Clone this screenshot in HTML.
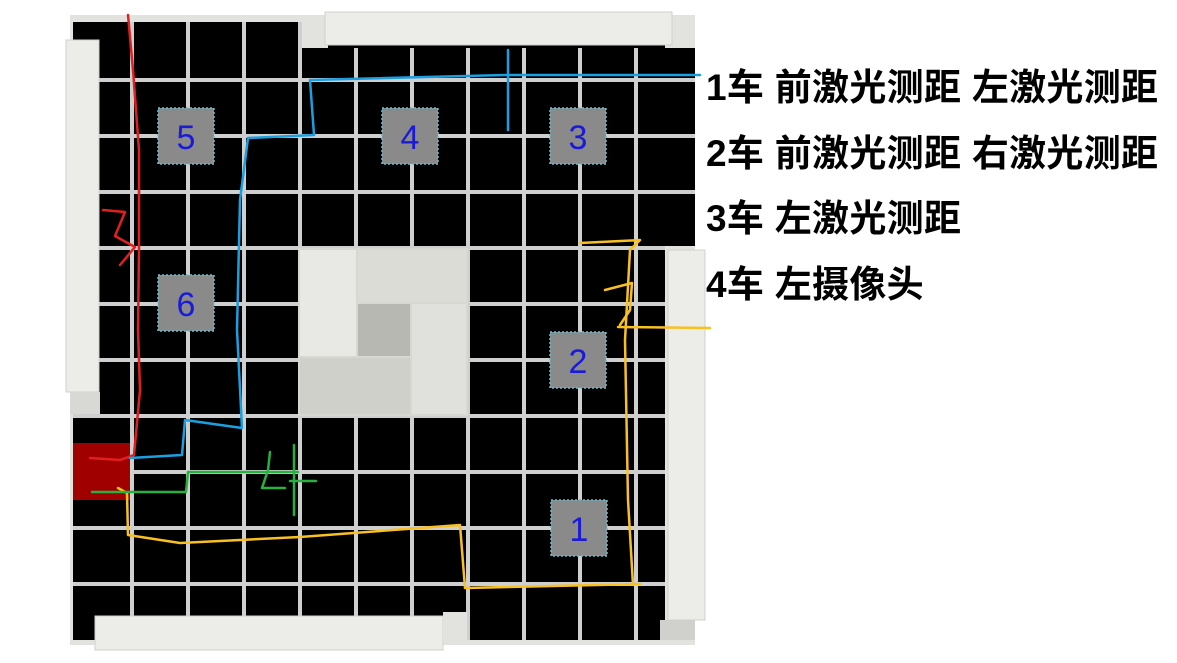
<!DOCTYPE html>
<html><head><meta charset="utf-8"><style>
html,body{margin:0;padding:0;background:#fff;width:1177px;height:663px;overflow:hidden}
.t{position:absolute;left:706px;font-family:"Liberation Sans","Noto Sans CJK SC",sans-serif;font-weight:bold;font-size:37px;letter-spacing:0.3px;color:#000;white-space:nowrap;line-height:1}
</style></head><body>
<svg width="1177" height="663" style="position:absolute;left:0;top:0">
<rect x="70" y="15" width="625" height="630" fill="#e2e2de"/>
<rect x="73" y="22" width="592" height="618" fill="#000"/>
<rect x="298" y="22" width="30" height="26" fill="#e2e2de"/>
<rect x="665" y="48" width="30" height="198" fill="#000"/>
<g stroke="#cfcfcf" stroke-width="4">
<line x1="132" y1="22" x2="132" y2="640"/><line x1="188" y1="22" x2="188" y2="640"/><line x1="244" y1="22" x2="244" y2="640"/><line x1="300" y1="22" x2="300" y2="640"/><line x1="356" y1="48" x2="356" y2="640"/><line x1="412" y1="48" x2="412" y2="640"/><line x1="468" y1="48" x2="468" y2="640"/><line x1="524" y1="48" x2="524" y2="640"/><line x1="580" y1="48" x2="580" y2="640"/><line x1="636" y1="48" x2="636" y2="640"/>
<line x1="73" y1="80" x2="695" y2="80"/><line x1="73" y1="136" x2="695" y2="136"/><line x1="73" y1="192" x2="695" y2="192"/><line x1="73" y1="248" x2="665" y2="248"/><line x1="73" y1="304" x2="665" y2="304"/><line x1="73" y1="360" x2="665" y2="360"/><line x1="73" y1="416" x2="665" y2="416"/><line x1="73" y1="472" x2="665" y2="472"/><line x1="73" y1="528" x2="665" y2="528"/><line x1="73" y1="584" x2="665" y2="584"/>
</g>
<rect x="66" y="40" width="33" height="352" fill="#ecece8" stroke="#d0d0cc"/>
<rect x="70" y="392" width="30" height="22" fill="#d8d8d4"/>
<rect x="325" y="12" width="347" height="33" fill="#ecece8" stroke="#d0d0cc"/>
<rect x="668" y="250" width="37" height="370" fill="#ecece8" stroke="#d0d0cc"/>
<rect x="95" y="616" width="348" height="34" fill="#ecece8" stroke="#d0d0cc"/>
<rect x="443" y="612" width="24" height="30" fill="#e2e2de"/>
<rect x="660" y="620" width="35" height="20" fill="#d0d0cc"/>
<rect x="298" y="248" width="170" height="168" fill="#d8d8d2"/>
<rect x="300" y="250" width="56" height="106" fill="#e8e8e4"/>
<rect x="358" y="250" width="108" height="52" fill="#dcdcd6"/>
<rect x="358" y="304" width="52" height="52" fill="#b8b8b2"/>
<rect x="412" y="304" width="54" height="110" fill="#e0e0dc"/>
<rect x="300" y="358" width="110" height="56" fill="#d0d0ca"/>
<rect x="73" y="443" width="57" height="57" fill="#a00000"/>
<g fill="#8a8a8a" stroke="#5fc0d8" stroke-width="1.5" stroke-dasharray="2 2">
<rect x="158" y="108" width="56" height="56"/><rect x="382" y="108" width="56" height="56"/><rect x="550" y="108" width="56" height="56"/>
<rect x="158" y="275" width="56" height="56"/><rect x="550" y="332" width="56" height="56"/><rect x="551" y="500" width="56" height="56"/>
</g>
<g fill="#1a1ad8" font-family="Liberation Sans,sans-serif" font-size="34" text-anchor="middle">
<text x="186" y="149">5</text><text x="410" y="149">4</text><text x="578" y="149">3</text>
<text x="186" y="316">6</text><text x="578" y="373">2</text><text x="579" y="541">1</text>
</g>
<g fill="none" stroke-width="2.5" stroke-linecap="round" stroke-linejoin="round">
<polyline stroke="#e02020" points="128,15 133,70 139,150 139,250 138,330 140,390 134,455 120,460 90,458"/>
<polyline stroke="#e02020" points="103,210 125,212 115,236 135,247 120,265"/>
<polyline stroke="#1aa0e0" points="700,75 505,75 310,80 314,135 248,138 240,200 237,330 242,428 185,420 182,455 130,458"/>
<polyline stroke="#1aa0e0" points="508,50 508,130"/>
<polyline stroke="#f8c020" points="118,488 127,493 128,535 180,543 300,537 460,525 465,588 640,584"/>
<polyline stroke="#f8c020" points="633,585 628,500 625,340 630,250 640,240 580,243"/>
<polyline stroke="#f8c020" points="618,327 710,328"/>
<polyline stroke="#f8c020" points="605,290 632,283 630,310 620,325"/>
<polyline stroke="#28b040" points="92,492 186,492 188,472 298,472"/>
<polyline stroke="#28b040" points="294,445 294,515"/>
<polyline stroke="#28b040" points="290,481 316,481"/>
<polyline stroke="#28b040" points="270,452 268,470 262,488 285,488"/>
</g>
</svg>
<div class="t" style="top:69px">1车 前激光测距 左激光测距</div>
<div class="t" style="top:135px">2车 前激光测距 右激光测距</div>
<div class="t" style="top:200px">3车 左激光测距</div>
<div class="t" style="top:266px">4车 左摄像头</div>
</body></html>
